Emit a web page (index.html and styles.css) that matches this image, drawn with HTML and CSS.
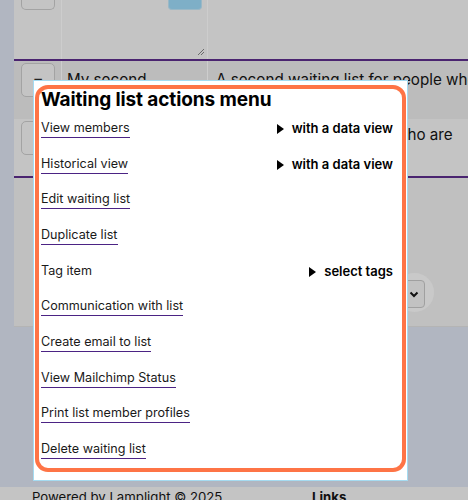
FILE: index.html
```html
<!DOCTYPE html>
<html>
<head>
<meta charset="utf-8">
<link rel="stylesheet" href="styles.css">
</head>
<body>
<div class="page">
  <div class="main">
    <div class="row row1">
      <div class="cell c1"><span class="btn btn-top"></span></div>
      <div class="cell c2">
        <span class="btn-blue"></span>
        <svg class="grip" width="8" height="8" viewBox="0 0 8 8"><path d="M1 7 L7 1 M4 7 L7 4" stroke="#6b6b6b" stroke-width="1"/></svg>
      </div>
      <div class="cell c3"></div>
    </div>
    <div class="row row2">
      <div class="cell c1"><span class="btn">=</span></div>
      <div class="cell c2 txt">My second</div>
      <div class="cell c3 txt">A second waiting list for people who want</div>
    </div>
    <div class="row row3">
      <div class="cell c1"><span class="btn"></span></div>
      <div class="cell c2"></div>
      <div class="cell c3 txt"><span class="indent">who are</span></div>
    </div>
    <div class="below">
      <span class="ring"></span>
      <span class="select"><svg width="10" height="7" viewBox="0 0 10 7"><path d="M1.5 1.5 L5 5 L8.5 1.5" fill="none" stroke="#111" stroke-width="2"/></svg></span>
    </div>
  </div>
  <div class="gap"></div>
  <footer class="footer">
    <span class="powered">Powered by Lamplight © 2025</span>
    <span class="links">Links</span>
  </footer>
</div>

<div class="modal">
  <div class="menu">
    <h2 class="title">Waiting list actions menu</h2>
    <ul class="items">
      <li class="item"><a class="link">View members</a><span class="sub">with a data view</span></li>
      <li class="item"><a class="link">Historical view</a><span class="sub">with a data view</span></li>
      <li class="item"><a class="link">Edit waiting list</a></li>
      <li class="item"><a class="link">Duplicate list</a></li>
      <li class="item"><span class="plain">Tag item</span><span class="sub">select tags</span></li>
      <li class="item"><a class="link">Communication with list</a></li>
      <li class="item"><a class="link">Create email to list</a></li>
      <li class="item"><a class="link">View Mailchimp Status</a></li>
      <li class="item"><a class="link">Print list member profiles</a></li>
      <li class="item"><a class="link">Delete waiting list</a></li>
    </ul>
  </div>
</div>
</body>
</html>
```
FILE: styles.css
```css
* { box-sizing: border-box; }
html, body { margin: 0; padding: 0; }
body {
  width: 468px;
  height: 500px;
  overflow: hidden;
  background: #b1b6c1;
  font-family: Inter, "Noto Sans", sans-serif;
  color: #111;
  position: relative;
}
.page { display: flex; flex-direction: column; height: 500px; }
.main {
  flex: 0 0 327px;
  margin-left: 14px;
  height: 327px;
  background: #c0c0c0;
  overflow: hidden;
  position: relative;
  border-bottom: 1px solid #b4b4b4;
}
.row {
  display: grid;
  grid-template-columns: 48px 146px 1fr;
}
.row1 { height: 61px; background: #c4c4c4; border-bottom: 2px solid #4a2470; }
.row2 { height: 58px; background: #bcbcbc; }
.row3 { height: 59px; background: #c4c4c4; border-bottom: 2px solid #4a2470; }
.cell { position: relative; border-right: 1px solid #cdcdcd; }
.cell.c3 { border-right: none; }
.c1 { padding: 2px 0 0 7px; }
.row1 .c1 { padding-top: 0; }
.btn {
  display: flex;
  align-items: center;
  justify-content: center;
  width: 34px;
  height: 34px;
  border: 1px solid #a3a3a3;
  border-radius: 5px;
  background: #c4c4c4;
  font-size: 17px;
  color: #222;
}
.btn-top {
  height: 10px;
  border-top: none;
  border-radius: 0 0 5px 5px;
}
.btn-blue {
  position: absolute;
  left: 106px;
  top: 0;
  width: 34px;
  height: 10px;
  background: #7eafc7;
  border: 1px solid #9ab8c6;
  border-top: none;
  border-radius: 0 0 4px 4px;
}
.grip { position: absolute; right: 2px; bottom: 3px; }
.txt {
  font-size: 15.2px;
  line-height: 20px;
  padding: 9px 0 0 5px;
  white-space: nowrap;
  overflow: hidden;
}
.row3 .txt { padding-top: 6px; }
.c3.txt { padding-left: 8px; }
.indent { display: inline-block; padding-left: 179px; }
.below { height: 150px; position: relative; }
.ring {
  position: absolute;
  left: 381px;
  top: 95px;
  width: 39px;
  height: 39px;
  border-radius: 50%;
  background: #c9c9c9;
}
.select {
  position: absolute;
  left: 370px;
  top: 102px;
  width: 41px;
  height: 28px;
  border: 1px solid #a0a0a0;
  border-radius: 4px;
  background: #c2c2c2;
  display: flex;
  align-items: center;
  justify-content: flex-end;
  padding-right: 5px;
}
.gap { flex: 0 0 160px; }
.footer {
  flex: 1 1 auto;
  min-height: 0;
  overflow: hidden;
  background: #c4c4c4;
  display: flex;
  font-size: 13.2px;
  line-height: 16px;
  padding: 2px 0 0 32px;
  white-space: nowrap;
}
.powered { width: 280px; }
.links { font-weight: 700; }

.modal {
  position: absolute;
  left: 33px;
  top: 80px;
  width: 375px;
  height: 401px;
  background: #fff;
  border: 1px solid #a5dbf1;
  padding: 4px 1px 8px 1px;
}
.menu {
  height: 100%;
  border: 4px solid #fe7446;
  border-radius: 13px;
  padding: 0 9px 0 2px;
}
.title {
  margin: 0;
  font-size: 19px;
  line-height: 21px;
  font-weight: 700;
  color: #000;
  letter-spacing: -0.1px;
}
.items { list-style: none; margin: 0; padding: 0; }
.item {
  height: 35.7px;
  display: flex;
  align-items: center;
  justify-content: space-between;
  font-size: 12.6px;
  line-height: 16px;
}
.link {
  color: #1a1a1a;
  text-decoration: none;
  border-bottom: 1px solid #4b2384;
  padding-bottom: 1px;
  margin-top: 2px;
}
.plain { color: #1a1a1a; }
.sub { font-weight: 600; color: #000; font-size: 13px; }
.sub::before {
  content: "";
  display: inline-block;
  width: 0;
  height: 0;
  border-left: 7px solid #000;
  border-top: 5px solid transparent;
  border-bottom: 5px solid transparent;
  margin-right: 8px;
  vertical-align: -1px;
}
```
